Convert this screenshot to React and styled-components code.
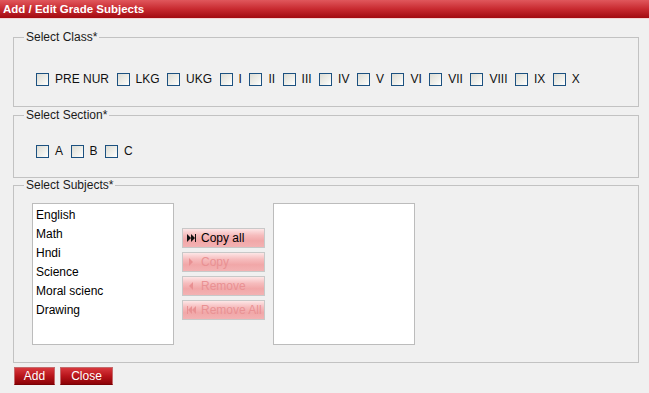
import styled, { createGlobalStyle } from "styled-components";

const GlobalStyle = createGlobalStyle`
  html, body {
    margin: 0;
    padding: 0;
    background: #f0f0f0;
  }
  body {
    font-family: "Liberation Sans", Arial, sans-serif;
    font-size: 12px;
    color: #000;
  }
`;

const Page = styled.div`
  width: 649px;
  height: 393px;
  background: #f0f0f0;
  overflow: hidden;
`;

const TitleBar = styled.div`
  height: 18px;
  padding-left: 3px;
  display: flex;
  align-items: center;
  background: linear-gradient(#e0575c 0%, #c82a30 50%, #a20a10 100%);
  color: #fff;
  font-size: 11.5px;
  font-weight: bold;
  border-bottom: 1px solid #f4d4d4;
`;

const Group = styled.fieldset`
  margin: ${(p) => p.$top}px 10px 0 13px;
  padding: ${(p) => p.$padTop}px 10px ${(p) => p.$padBottom}px;
  border: 1px solid #c2c2c2;
  min-width: 0;
`;

const Legend = styled.legend`
  padding: 0 2px;
  font-size: 12px;
  line-height: 14px;
  color: #1a1a1a;
`;

const CheckRow = styled.div`
  display: flex;
  align-items: center;
  padding-left: 12px;
  height: 14px;
`;

const CheckItem = styled.label`
  display: flex;
  align-items: center;
  margin-right: 7.5px;
  font-size: 12px;
  color: #111;
`;

const Box = styled.input.attrs({ type: "checkbox" })`
  appearance: none;
  width: 13px;
  height: 13px;
  margin: 0 6px 0 0;
  border: 1px solid #1c5180;
  box-sizing: border-box;
  background: linear-gradient(135deg, #dcdcd4 0%, #f4f4f0 70%, #ffffff 100%);
`;

const SubjectArea = styled.div`
  display: flex;
  align-items: flex-start;
  padding-left: 8px;
`;

const ListBox = styled.div`
  width: 142px;
  height: 142px;
  box-sizing: border-box;
  background: #fff;
  border: 1px solid #bcbcbc;
  padding: 2px 3px;
`;

const ListItem = styled.div`
  font-size: 12px;
  line-height: 19px;
  color: #000;
`;

const MoverColumn = styled.div`
  display: flex;
  flex-direction: column;
  gap: 4px;
  margin: 25px 8px 0 8px;
`;

const MoveButton = styled.button`
  width: 83px;
  height: 20px;
  display: flex;
  align-items: center;
  gap: 5px;
  padding: 0 0 0 4px;
  border: 1px solid #c8c8c8;
  background: linear-gradient(#fde6e6 0%, #f6bcbd 35%, #f1a7a8 65%, #f3b2b3 100%);
  font-family: "Liberation Sans", Arial, sans-serif;
  font-size: 12px;
  color: ${(p) => (p.disabled ? "#e99193" : "#000")};
  cursor: pointer;
`;

const Icon = styled.svg`
  width: 9px;
  height: 8px;
  fill: ${(p) => (p.$dim ? "#e99193" : "#111")};
  flex: none;
`;

const Footer = styled.div`
  display: flex;
  gap: 5px;
  margin: 4px 0 0 14px;
`;

const RedButton = styled.button`
  width: ${(p) => p.$w}px;
  height: 18px;
  padding: 0;
  border: 1px solid #c46a6c;
  border-bottom-color: #7a0004;
  background: linear-gradient(#d8383d 0%, #b8151b 50%, #8c0207 100%);
  color: #fff;
  font-family: "Liberation Sans", Arial, sans-serif;
  font-size: 12px;
  cursor: pointer;
`;

const classes = ["PRE NUR", "LKG", "UKG", "I", "II", "III", "IV", "V", "VI", "VII", "VIII", "IX", "X"];
const sections = ["A", "B", "C"];
const subjects = ["English", "Math", "Hndi", "Science", "Moral scienc", "Drawing"];

const CopyAllIcon = ({ dim }) => (
  <Icon viewBox="0 0 9 8" $dim={dim}>
    <path d="M0 0 L4 4 L0 8 Z M4 0 L8 4 L4 8 Z" />
    <rect x="8" y="0" width="1" height="8" />
  </Icon>
);

const CopyIcon = ({ dim }) => (
  <Icon viewBox="0 0 9 8" $dim={dim}>
    <path d="M2 0 L6 4 L2 8 Z" />
  </Icon>
);

const RemoveIcon = ({ dim }) => (
  <Icon viewBox="0 0 9 8" $dim={dim}>
    <path d="M6 0 L2 4 L6 8 Z" />
  </Icon>
);

const RemoveAllIcon = ({ dim }) => (
  <Icon viewBox="0 0 9 8" $dim={dim}>
    <rect x="0" y="0" width="1" height="8" />
    <path d="M5 0 L1 4 L5 8 Z M9 0 L5 4 L9 8 Z" />
  </Icon>
);

export default function App() {
  return (
    <Page>
      <GlobalStyle />
      <TitleBar>Add / Edit Grade Subjects</TitleBar>

      <Group $top={11} $padTop={28} $padBottom={20}>
        <Legend>Select Class*</Legend>
        <CheckRow>
          {classes.map((c) => (
            <CheckItem key={c}>
              <Box />
              {c}
            </CheckItem>
          ))}
        </CheckRow>
      </Group>

      <Group $top={1} $padTop={22} $padBottom={19}>
        <Legend>Select Section*</Legend>
        <CheckRow>
          {sections.map((s) => (
            <CheckItem key={s}>
              <Box />
              {s}
            </CheckItem>
          ))}
        </CheckRow>
      </Group>

      <Group $top={0} $padTop={11} $padBottom={17}>
        <Legend>Select Subjects*</Legend>
        <SubjectArea>
          <ListBox>
            {subjects.map((s) => (
              <ListItem key={s}>{s}</ListItem>
            ))}
          </ListBox>
          <MoverColumn>
            <MoveButton>
              <CopyAllIcon />
              Copy all
            </MoveButton>
            <MoveButton disabled>
              <CopyIcon dim />
              Copy
            </MoveButton>
            <MoveButton disabled>
              <RemoveIcon dim />
              Remove
            </MoveButton>
            <MoveButton disabled>
              <RemoveAllIcon dim />
              Remove All
            </MoveButton>
          </MoverColumn>
          <ListBox />
        </SubjectArea>
      </Group>

      <Footer>
        <RedButton $w={41}>Add</RedButton>
        <RedButton $w={53}>Close</RedButton>
      </Footer>
    </Page>
  );
}
